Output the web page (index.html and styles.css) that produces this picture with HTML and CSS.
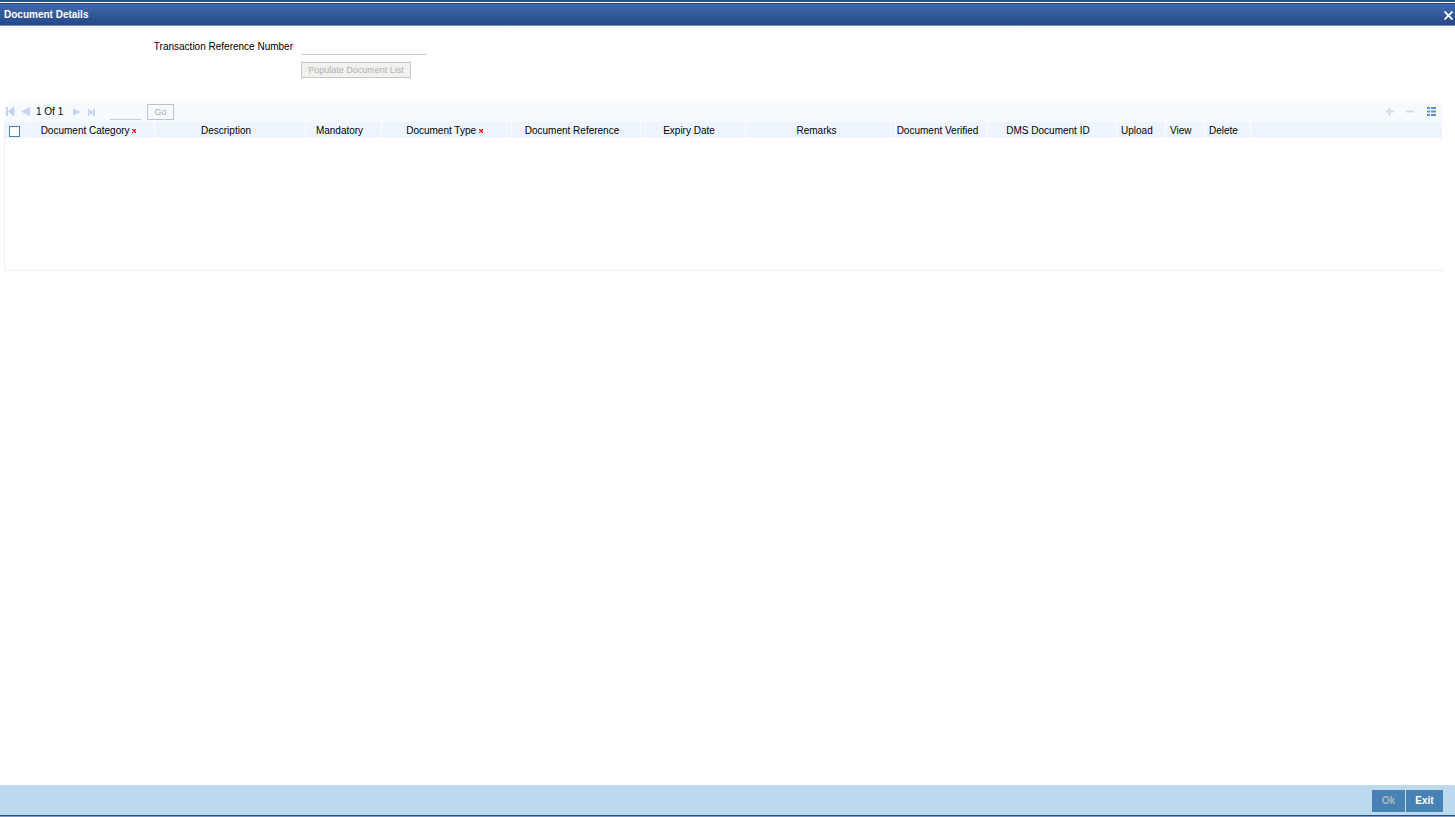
FILE: index.html
```html
<!DOCTYPE html>
<html lang="en">
<head>
<meta charset="utf-8">
<title>Document Details</title>
<link rel="stylesheet" href="styles.css">
</head>
<body>
<div class="window">
  <header class="titlebar">
    <h1 class="title">Document Details</h1>
    <button class="close" type="button" aria-label="Close">
      <svg width="9" height="9" viewBox="0 0 9 9"><path d="M.5 .5l8 8M8.500 .5l-8 8" stroke="#fff" stroke-width="1.800"/></svg>
    </button>
  </header>
  <main class="content">
    <form class="form">
      <label class="label" for="txn">Transaction Reference Number</label>
      <input class="field" id="txn" type="text">
      <button class="populate" type="button" disabled>Populate Document List</button>
    </form>
    <section class="grid">
      <div class="pager">
        <button class="icon" type="button" aria-label="First"><svg width="9" height="9" viewBox="0 0 9 9" fill="#c3d6f1"><path d="M0 0h2v9H0zM7 0v9L2 4.500zM6.500 0h2v9h-2z"/></svg></button>
        <button class="icon" type="button" aria-label="Previous"><svg width="9" height="9" viewBox="0 0 9 9" fill="#c3d6f1"><path d="M9 0v9L0 4.500z"/></svg></button>
        <span class="count">1 Of 1</span>
        <button class="icon" type="button" aria-label="Next"><svg width="9" height="9" viewBox="0 0 9 9" fill="#c3d6f1"><path d="M0 1v8L7 5z"/></svg></button>
        <button class="icon" type="button" aria-label="Last"><svg width="9" height="9" viewBox="0 0 9 9" fill="#c3d6f1"><path d="M0 2h1.500v7H0zM1 2v7l5-3.500zM5 2h2v7H5z"/></svg></button>
        <input class="page" type="text" aria-label="Page number">
        <button class="go" type="button" disabled>Go</button>
        <div class="tools">
          <button class="icon" type="button" aria-label="Add row"><svg width="9" height="9" viewBox="0 0 9 9"><path d="M4.500 1v8M1 4.500h8" stroke="#cfdef3" stroke-width="2"/></svg></button>
          <button class="icon" type="button" aria-label="Delete row"><svg width="9" height="9" viewBox="0 0 9 9"><path d="M0 4.500h8" stroke="#cfdef3" stroke-width="2"/></svg></button>
          <button class="icon" type="button" aria-label="Single view"><svg width="9" height="9" viewBox="0 0 9 9"><path d="M0 1h3M4 1h5M0 4.500h3M4 4.500h5M0 8h3M4 8h5" stroke="#5c8fd8" stroke-width="2"/></svg></button>
        </div>
      </div>
      <div class="body">
        <table class="table">
          <colgroup><col class="w22"><col class="w128"><col class="w151"><col class="w76"><col class="w130"><col class="w129"><col class="w105"><col class="w150"><col class="w92"><col class="w129"><col class="w49"><col class="w39"><col class="w46"><col></colgroup>
          <thead><tr>
            <th class="pick"><input class="check" type="checkbox" aria-label="Select all"></th>
            <th class="must">Document Category <span class="req"><svg width="4" height="4" viewBox="0 0 4 4"><path d="M0 0l4 4M4 0L0 4" stroke="#f00" stroke-width="1.300"/></svg></span></th>
            <th>Description</th>
            <th>Mandatory</th>
            <th class="must">Document Type <span class="req"><svg width="4" height="4" viewBox="0 0 4 4"><path d="M0 0l4 4M4 0L0 4" stroke="#f00" stroke-width="1.300"/></svg></span></th>
            <th>Document Reference</th>
            <th>Expiry Date</th>
            <th>Remarks</th>
            <th>Document Verified</th>
            <th>DMS Document ID</th>
            <th class="start">Upload</th>
            <th class="start">View</th>
            <th class="start">Delete</th>
            <th></th>
          </tr></thead>
        </table>
      </div>
    </section>
  </main>
  <footer class="footer">
    <button class="action" type="button" disabled>Ok</button>
    <button class="action exit" type="button">Exit</button>
  </footer>
</div>
</body>
</html>
```
FILE: styles.css
```css
* { box-sizing: border-box; }
body { margin: 0; font: 10px/12px "Liberation Sans", Arial, sans-serif; color: #000; background: #fff; }
button, input { font: inherit; margin: 0; padding: 0; border-radius: 0; }
svg { display: block; }
.window { display: flex; flex-direction: column; min-height: 100vh; border-top: 2px solid #2b4f8c; border-bottom: 1px solid #7f9cc8; }
.titlebar { display: flex; align-items: center; justify-content: space-between; height: 23px; margin-top: 1px; padding: 0 2px 0 4px; color: #fff; background: linear-gradient(#426ba8, #24488a); border-top: 1px solid #1f4180; border-bottom: 1px solid #7b8fae; }
.title { margin: 0; font-size: 10px; line-height: 14px; }
.close { padding: 2px 0 0; border: 0; background: none; }
.content { flex: 1; }
.form { display: grid; grid-template-columns: 293px 126px; column-gap: 8px; row-gap: 7px; align-items: center; padding-top: 14px; }
.label { padding-bottom: 2px; text-align: right; }
.field { width: 100%; height: 15px; border: 0; border-bottom: 1px solid #ccc; background: none; outline: none; }
.populate { grid-column: 2; width: 110px; height: 16px; border: 1px solid #c8c8c8; background: #f2f1ed; color: #b0b0b0; font-size: 9px; }
.grid { margin: 25px 12px 0 4px; }
.pager { display: flex; align-items: center; gap: 6px; height: 19px; padding: 0 0 2px 2px; background: #f7faff; }
.icon { width: 9px; height: 9px; border: 0; background: none; }
.count { width: 31px; white-space: nowrap; }
.page { width: 31px; height: 16px; margin-left: 7px; border: 0; border-bottom: 1px solid #ccc; background: none; }
.go { width: 27px; height: 16px; border: 1px solid #bec3cb; background: #f7faff; color: #aaa; font-size: 9px; }
.tools { display: flex; gap: 12px; margin-left: auto; padding-right: 7px; }
.body { min-height: 149px; border-left: 1px solid #eeeefc; border-bottom: 1px solid #eeeefc; }
.table { width: 100%; table-layout: fixed; border-collapse: separate; border-spacing: 0; }
.table th { height: 16px; padding: 1px 8px 0 0; font-weight: 400; line-height: 15px; white-space: nowrap; text-align: center; background: #eef5ff; border-right: 1px solid #fff; }
.table th.must { padding-right: 4px; }
.table th.start { padding: 1px 0 0 4px; text-align: left; }
.table th.pick { padding: 1px 0 0 4px; text-align: left; border-right: 1px solid #f7faff; }
.check { display: block; appearance: none; width: 11px; height: 11px; margin-top: 1px; border: 1px solid #3f82b8; background: #fff; }
.req { display: inline-block; vertical-align: 1px; }
.w22 { width: 22px; } .w128 { width: 128px; } .w151 { width: 151px; } .w76 { width: 76px; }
.w130 { width: 130px; } .w129 { width: 129px; } .w105 { width: 105px; } .w150 { width: 150px; }
.w92 { width: 92px; } .w49 { width: 49px; } .w39 { width: 39px; } .w46 { width: 46px; }
.footer { display: flex; justify-content: flex-end; align-items: center; gap: 1px; height: 31px; padding: 2px 12px 0 0; background: #bcd9ee; border-bottom: 1px solid #24488a; }
.action { min-width: 33px; height: 22px; padding: 0 9px; border: 0; background: #4682b4; color: #fff; font-weight: 700; }
.exit { min-width: 37px; }
.action:disabled { color: #b0b8bd; }
```
